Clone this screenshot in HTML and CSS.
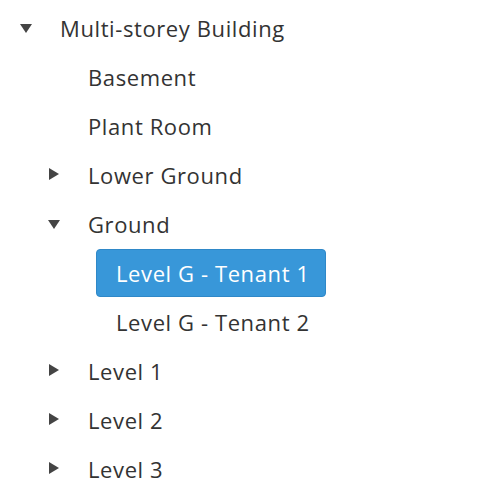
FILE: index.html
```html
<!DOCTYPE html>
<html>
<head>
<meta charset="utf-8">
<link rel="stylesheet" href="styles.css">
</head>
<body>
<ul class="tree">
  <li>
    <div class="row"><span class="toggle down"></span><span class="label">Multi-storey Building</span></div>
    <ul>
      <li><div class="row"><span class="toggle"></span><span class="label">Basement</span></div></li>
      <li><div class="row"><span class="toggle"></span><span class="label">Plant Room</span></div></li>
      <li><div class="row"><span class="toggle right"></span><span class="label">Lower Ground</span></div></li>
      <li>
        <div class="row"><span class="toggle down"></span><span class="label">Ground</span></div>
        <ul>
          <li><div class="row"><span class="toggle"></span><span class="label selected">Level G - Tenant 1</span></div></li>
          <li><div class="row"><span class="toggle"></span><span class="label">Level G - Tenant 2</span></div></li>
        </ul>
      </li>
      <li><div class="row"><span class="toggle right"></span><span class="label">Level 1</span></div></li>
      <li><div class="row"><span class="toggle right"></span><span class="label">Level 2</span></div></li>
      <li><div class="row"><span class="toggle right"></span><span class="label">Level 3</span></div></li>
    </ul>
  </li>
</ul>
</body>
</html>
```
FILE: styles.css
```css
html, body {
  margin: 0;
  padding: 0;
  background: #fff;
}
body {
  font-family: "Open Sans", "Noto Sans", sans-serif;
  font-size: 22px;
  letter-spacing: 0.6px;
  color: #333;
}
ul {
  list-style: none;
  margin: 0;
  padding: 0;
}
.tree {
  padding: 4px 0 0 20px;
}
.tree ul {
  padding-left: 28px;
}
.row {
  display: flex;
  align-items: center;
  height: 47px;
  margin-bottom: 2px;
}
.toggle {
  width: 20px;
  height: 47px;
  flex: none;
  position: relative;
}
.toggle.down::before {
  content: "";
  position: absolute;
  left: 0;
  top: 20px;
  border-left: 6.5px solid transparent;
  border-right: 6.5px solid transparent;
  border-top: 9px solid #444;
}
.toggle.right::before {
  content: "";
  position: absolute;
  left: 1px;
  top: 17px;
  border-top: 6.5px solid transparent;
  border-bottom: 6.5px solid transparent;
  border-left: 10px solid #444;
}
.label {
  display: flex;
  align-items: center;
  height: 45px;
  padding: 1px 15px 0 19px;
  box-sizing: content-box;
  border: 1px solid transparent;
  border-radius: 4px;
  white-space: nowrap;
}
.label.selected {
  background: #3897d9;
  border-color: #2f88c8;
  color: #fff;
}
```
